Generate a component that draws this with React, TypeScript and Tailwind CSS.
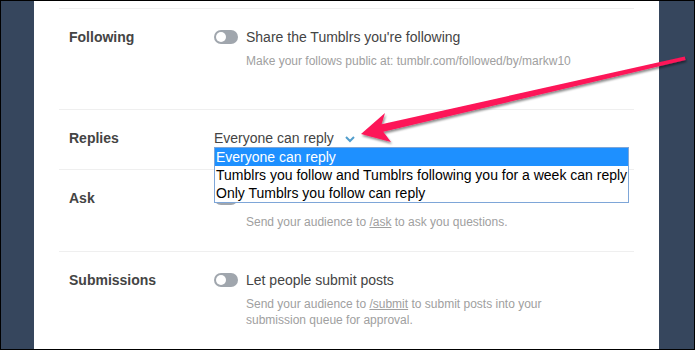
import React from "react";

function Toggle() {
  return (
    <div className="relative w-[24px] h-[14px] rounded-full bg-[#a0a6ad] shrink-0 mt-[3px]">
      <div className="absolute left-[2px] top-[2px] w-[10px] h-[10px] rounded-full bg-white" />
    </div>
  );
}

function Row({
  label,
  children,
  pb,
}: {
  label: string;
  children: React.ReactNode;
  pb: string;
}) {
  return (
    <div className={`flex border-t border-[#efefef] pt-[18px] ${pb}`}>
      <div className="w-[155px] pl-[10px] text-[14px] leading-[20px] font-bold text-[#444]">
        {label}
      </div>
      <div className="flex-1">{children}</div>
    </div>
  );
}

export default function App() {
  return (
    <div
      className="relative w-[695px] h-[350px] border border-black flex overflow-hidden bg-white"
      style={{ fontFamily: '"Liberation Sans", Arial, sans-serif' }}
    >
      <div className="w-[33px] bg-[#36465d] shrink-0" />
      <div className="w-[625px] bg-white px-[25px] pt-[7px] shrink-0">
        <Row label="Following" pb="pb-[40px]">
          <div className="flex gap-[8px]">
            <Toggle />
            <div className="text-[14px] leading-[20px] text-[#444]">
              Share the Tumblrs you're following
            </div>
          </div>
          <div className="pl-[32px] mt-[6px] text-[12px] leading-[16px] text-[#a0a0a0]">
            Make your follows public at: tumblr.com/followed/by/markw10
          </div>
        </Row>
        <Row label="Replies" pb="pb-[21px]">
          <div className="relative">
            <div className="flex items-center gap-[11px] text-[14px] leading-[20px] text-[#444]">
              <span>Everyone can reply</span>
              <svg width="10" height="7" viewBox="0 0 10 7" className="mt-[2px]">
                <path d="M1 1 L5 5 L9 1" fill="none" stroke="#529ecc" strokeWidth="2" />
              </svg>
            </div>
            <div className="absolute left-0 top-[19px] w-[415px] z-10 bg-white border border-[#7ea6d8] text-[14px] leading-[18px] text-black">
              <div className="bg-[#1e90ff] text-white pl-[1px]">Everyone can reply</div>
              <div className="pl-[1px]">
                Tumblrs you follow and Tumblrs following you for a week can reply
              </div>
              <div className="pl-[1px]">Only Tumblrs you follow can reply</div>
            </div>
          </div>
        </Row>
        <Row label="Ask" pb="pb-[21px]">
          <div className="flex gap-[8px] h-[20px]">
            <Toggle />
          </div>
          <div className="pl-[32px] mt-[6px] text-[12px] leading-[16px] text-[#a0a0a0]">
            Send your audience to <span className="underline">/ask</span> to ask you
            questions.
          </div>
        </Row>
        <Row label="Submissions" pb="pb-[30px]">
          <div className="flex gap-[8px]">
            <Toggle />
            <div className="text-[14px] leading-[20px] text-[#444]">
              Let people submit posts
            </div>
          </div>
          <div className="pl-[32px] mt-[6px] w-[372px] text-[12px] leading-[16px] text-[#a0a0a0]">
            <div>
              Send your audience to <span className="underline">/submit</span> to submit
              posts into your
            </div>
            <div>submission queue for approval.</div>
          </div>
        </Row>
      </div>
      <div className="w-[35px] bg-[#36465d] shrink-0" />

      <svg
        className="absolute left-[-1px] top-[-1px] pointer-events-none z-20"
        width="695"
        height="350"
        viewBox="0 0 695 350"
      >
        <defs>
          <filter id="sh" x="-10%" y="-50%" width="120%" height="200%">
            <feDropShadow dx="1" dy="2" stdDeviation="1.2" floodColor="#000" floodOpacity="0.45" />
          </filter>
        </defs>
        <polygon
          points="361,134 385,113 381.6,124.2 684.7,56.5 685.6,60 383.2,131.8 391,142"
          fill="#fd1459"
          filter="url(#sh)"
        />
      </svg>
    </div>
  );
}
